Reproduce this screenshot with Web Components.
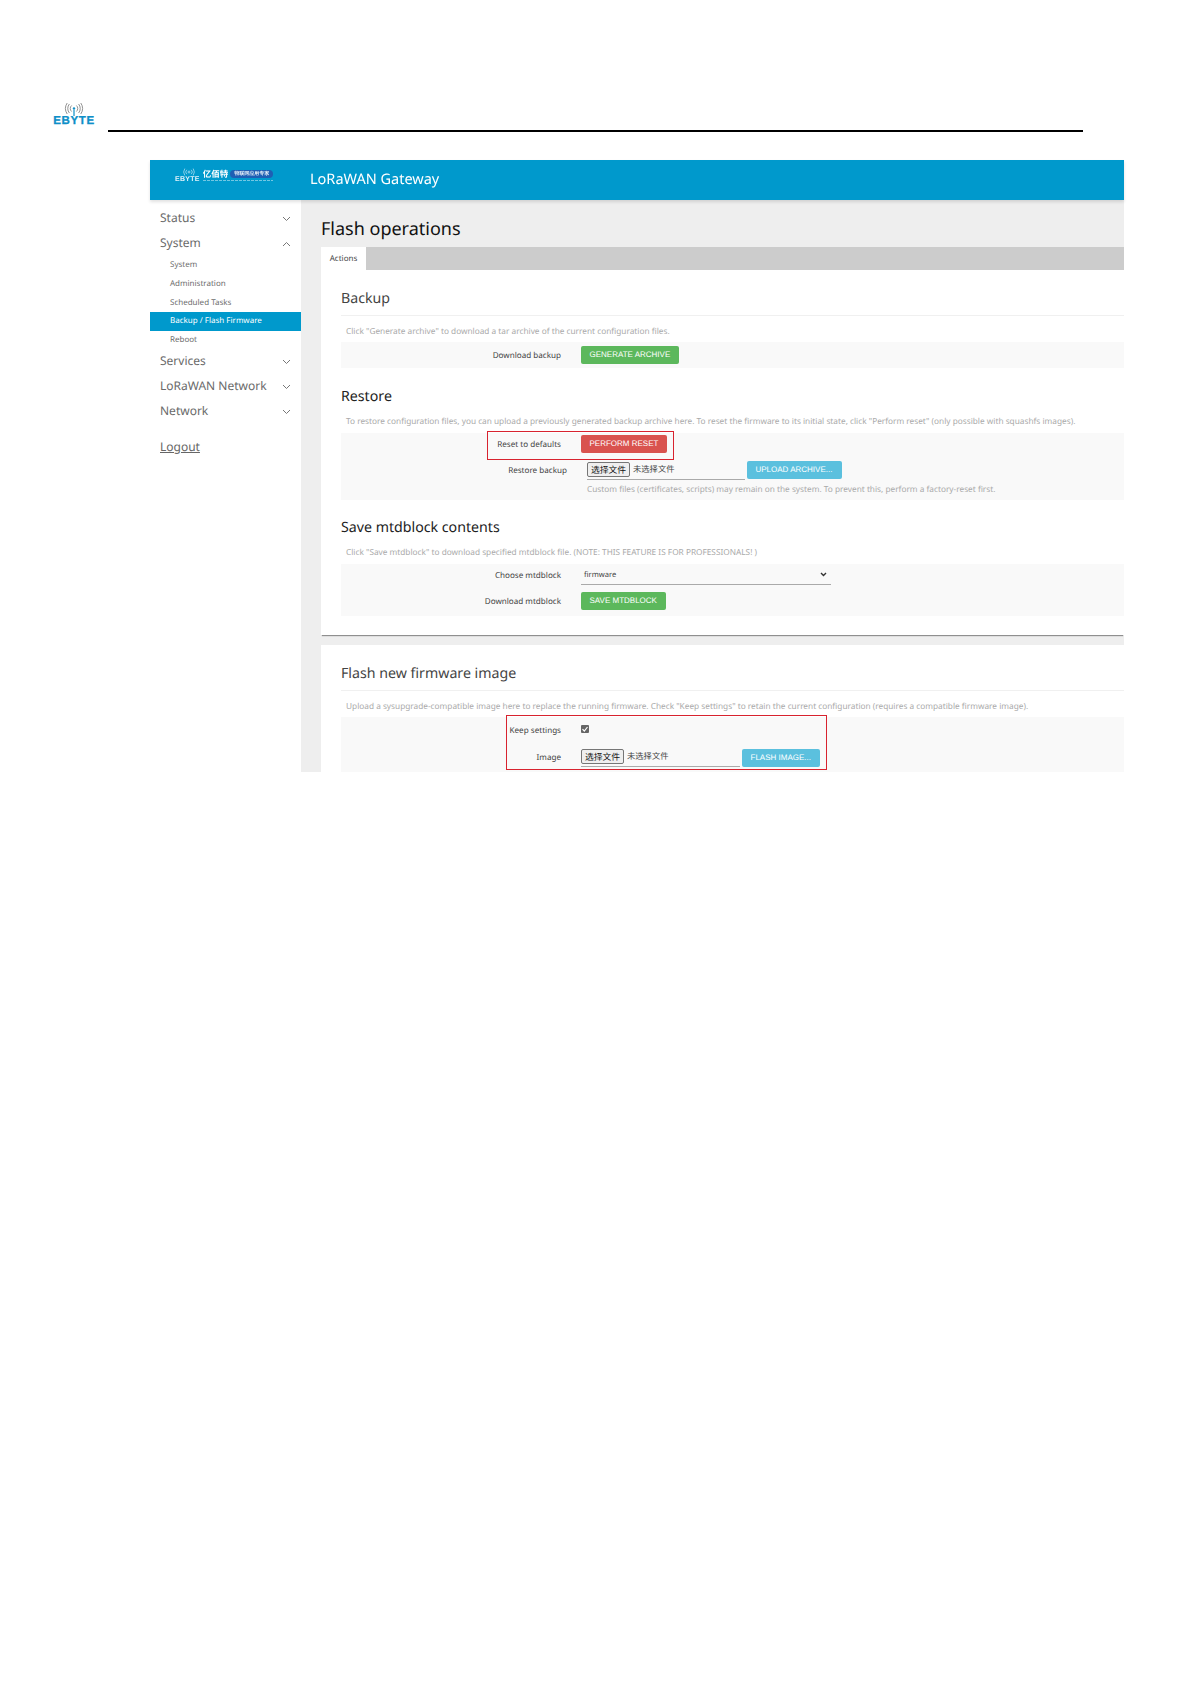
<!DOCTYPE html>
<html>
<head>
<meta charset="utf-8">
<title>Flash operations</title>
<style>
    html, body { margin: 0; background: #fff; }
    body { min-height: 1684px; font-family: "Noto Sans", "Noto Sans CJK SC", sans-serif; text-rendering: geometricPrecision; }
</style>
</head>
<body>
<doc-header></doc-header>
<gw-app>
    <gw-topbar slot="top"></gw-topbar>
    <gw-sidebar slot="side">
        <gw-nav label="Status"></gw-nav>
        <gw-nav label="System" open>
            <gw-subnav>System</gw-subnav>
            <gw-subnav>Administration</gw-subnav>
            <gw-subnav>Scheduled Tasks</gw-subnav>
            <gw-subnav active>Backup / Flash Firmware</gw-subnav>
            <gw-subnav>Reboot</gw-subnav>
        </gw-nav>
        <gw-nav label="Services"></gw-nav>
        <gw-nav label="LoRaWAN Network"></gw-nav>
        <gw-nav label="Network"></gw-nav>
        <gw-logout>Logout</gw-logout>
    </gw-sidebar>
    <gw-main slot="main">
        <gw-panel>
            <gw-section heading="Backup" rule desc='Click "Generate archive" to download a tar archive of the current configuration files.'>
                <gw-row label="Download backup" height="26"><gw-btn color="green" w="98">GENERATE ARCHIVE</gw-btn></gw-row>
            </gw-section>
            <gw-section heading="Restore" dark top="16" desc='To restore configuration files, you can upload a previously generated backup archive here. To reset the firmware to its initial state, click "Perform reset" (only possible with squashfs images).'>
                <gw-row label="Reset to defaults" height="22"><gw-btn color="red" w="86">PERFORM RESET</gw-btn></gw-row>
                <gw-row label="Restore backup" height="30" inset>
                    <gw-file width="158"></gw-file>
                    <gw-btn color="blue" w="95">UPLOAD ARCHIVE...</gw-btn>
                </gw-row>
                <gw-hint>Custom files (certificates, scripts) may remain on the system. To prevent this, perform a factory-reset first.</gw-hint>
            </gw-section>
            <gw-section heading="Save mtdblock contents" dark top="15" desc='Click "Save mtdblock" to download specified mtdblock file. (NOTE: THIS FEATURE IS FOR PROFESSIONALS! )'>
                <gw-row label="Choose mtdblock" height="22"><gw-select>firmware</gw-select></gw-row>
                <gw-row label="Download mtdblock" height="30"><gw-btn color="green" w="85">SAVE MTDBLOCK</gw-btn></gw-row>
            </gw-section>
        </gw-panel>
        <gw-panel last>
            <gw-section heading="Flash new firmware image" rule desc='Upload a sysupgrade-compatible image here to replace the running firmware. Check "Keep settings" to retain the current configuration (requires a compatible firmware image).'>
                <gw-row label="Keep settings" height="26"><gw-check></gw-check></gw-row>
                <gw-row label="Image" height="29">
                    <gw-file width="159"></gw-file>
                    <gw-btn color="blue" w="78">FLASH IMAGE...</gw-btn>
                </gw-row>
            </gw-section>
        </gw-panel>
        <gw-mark style="left:186px;top:231px;width:187px;height:29px"></gw-mark>
        <gw-mark style="left:205px;top:515px;width:321px;height:55px"></gw-mark>
    </gw-main>
</gw-app>

<script>
function def(name, css, html, setup) {
    customElements.define(name, class extends HTMLElement {
        constructor() {
            super();
            this.attachShadow({ mode: 'open' });
            this.shadowRoot.innerHTML = `<style>${css}</style>${html}`;
        }
        connectedCallback() {
            if (setup) setup(this, this.shadowRoot);
        }
    });
}

const chevron = up => `<svg width="9" height="6" viewBox="0 0 9 6" fill="none" stroke="#777" stroke-width="1"><path d="${up ? 'M1 5l3.5-3.5L8 5' : 'M1 1l3.5 3.5L8 1'}"/></svg>`;

def('doc-header', `
    :host { display: flex; align-items: flex-end; height: 132px; box-sizing: border-box; padding-left: 53px; margin-bottom: 28px; }
    .logo { width: 42px; height: 24px; display: flex; flex-direction: column; align-items: center; margin-bottom: 5px; }
    .word { font: 900 11.5px/9px "Liberation Sans", sans-serif; color: #0f8fc8; letter-spacing: .6px; -webkit-text-stroke: .3px #0f8fc8; }
    .line { flex: 1; height: 2px; background: #000; margin: 0 108px 0 13px; }
    svg { display: block; margin-bottom: 1px; }
`, `
    <div class="logo">
        <svg width="22" height="13" viewBox="0 0 22 13" fill="none" stroke="#777" stroke-width=".8">
            <circle cx="11" cy="5.5" r="1.2" fill="#0f8fc8" stroke="none"/>
            <path d="M8.6 2.5a4 4 0 0 0 0 6M13.4 2.5a4 4 0 0 1 0 6M6.4 1a7 7 0 0 0 0 9M15.6 1a7 7 0 0 1 0 9M4.2 0a10 10 0 0 0 0 11M17.8 0a10 10 0 0 1 0 11"/>
            <path d="M11 7v6" stroke="#0f8fc8" stroke-width="1.2"/>
        </svg>
        <div class="word">EBYTE</div>
    </div>
    <div class="line"></div>
`);

def('gw-app', `
    :host { display: grid; grid-template-columns: 151px 823px; grid-template-rows: 40px 572px; width: 974px; margin-left: 150px; background: #fff; filter: blur(.25px); }
    ::slotted([slot=top]) { grid-column: 1 / 3; }
`, `<slot name="top"></slot><slot name="side"></slot><slot name="main"></slot>`);

def('gw-topbar', `
    :host { display: flex; align-items: center; background: #0099cc; color: #fff; box-shadow: 0 2px 3px rgba(0,0,0,.12); position: relative; z-index: 1; }
    .logo { width: 110px; margin: 0 0 13px 25px; display: flex; align-items: flex-end; gap: 3px; height: 18px; }
    .brand { position: relative; font: 900 7px/7px "Liberation Sans", sans-serif; letter-spacing: .3px; padding-top: 9px; color: #dff2fa; }
    .brand svg { position: absolute; left: 6px; top: 1px; }
    .right { display: flex; flex-direction: column; gap: 1px; }
    .top { display: flex; align-items: center; gap: 2px; }
    .cn { font: 700 8.5px/10px "Noto Sans CJK SC", sans-serif; }
    .pill { background: #1f5fb4; border-radius: 4px; font: 500 5px/8px "Noto Sans CJK SC", sans-serif; padding: 0 4px; height: 8px; white-space: nowrap; }
    .sub { height: 1px; background: repeating-linear-gradient(90deg, rgba(255,255,255,.45) 0 3px, transparent 3px 4px); margin-bottom: 2px; }
    .title { margin-left: 25px; font-size: 14.5px; font-weight: 400; position: relative; top: -1px; }
`, `
    <div class="logo">
        <div class="brand">
            <svg width="16" height="9" viewBox="0 0 16 9" fill="none" stroke="#dff2fa" stroke-width=".6"><circle cx="8" cy="4" r="1"/><path d="M5.8 1.8a3 3 0 0 0 0 4.4M10.2 1.8a3 3 0 0 1 0 4.4M3.8.6a6 6 0 0 0 0 6.8M12.2.6a6 6 0 0 1 0 6.8"/></svg>
            EBYTE
        </div>
        <div class="right">
            <div class="top"><span class="cn">亿佰特</span><span class="pill">物联网应用专家</span></div>
            <div class="sub"></div>
        </div>
    </div>
    <div class="title">LoRaWAN Gateway</div>
`);

def('gw-sidebar', `
    :host { display: block; background: #fff; padding-top: 5px; color: #666; }
`, `<slot></slot>`);

def('gw-nav', `
    :host { display: block; }
    .head { height: 25px; display: flex; align-items: center; justify-content: space-between; padding: 0 10px; font-size: 12px; color: #6a6a6a; }
    .sub { padding-top: 1px; margin-bottom: -2px; }
    .sub:not(.open) { display: none; }
`, `<div class="head"><span class="t"></span><span class="c"></span></div><div class="sub"><slot></slot></div>`, (el, root) => {
    root.querySelector('.t').textContent = el.getAttribute('label');
    root.querySelector('.c').innerHTML = chevron(el.hasAttribute('open'));
    root.querySelector('.sub').classList.toggle('open', el.hasAttribute('open'));
});

def('gw-subnav', `
    :host { display: block; height: 18.8px; line-height: 18px; padding-left: 20px; font-size: 8px; color: #6e6e6e; }
    :host([active]) { background: #0099cc; color: #fff; }
`, `<slot></slot>`);

def('gw-logout', `
    :host { display: block; margin: 15px 0 0 10px; font-size: 12px; text-decoration: underline; color: #666; }
`, `<slot></slot>`);

def('gw-main', `
    :host { display: block; position: relative; background: #eee; padding: 14px 0 0 20px; overflow: hidden; }
    h1 { margin: 0; font-size: 18px; font-weight: 400; line-height: 30px; color: #111; height: 33px; }
    .tabs { display: flex; height: 23px; background: #ccc; }
    .tab { width: 45px; background: #fff; font-size: 8px; line-height: 23px; text-align: center; color: #444; }
`, `<h1>Flash operations</h1><div class="tabs"><div class="tab">Actions</div></div><slot></slot>`);

def('gw-panel', `
    :host { display: block; background: #fff; padding: 0 0 19px 20px; margin-bottom: 10px; box-shadow: 0 2px 1px -1px rgba(0,0,0,.4); }
    :host([last]) { box-shadow: none; margin: 0; padding-bottom: 0; }
`, `<slot></slot>`);

def('gw-section', `
    :host { display: block; padding-top: 15px; }
    h3 { margin: 0; font-size: 14.2px; font-weight: 400; height: 26px; line-height: 27px; color: #444; }
    :host([dark]) h3 { color: #222; line-height: 26px; }
    .rule { height: 1px; background: #f0f0f0; margin-top: 4px; }
    p { margin: 0; padding: 6px 0 0 5px; font-size: 8.28px; line-height: 20px; color: #aaa; white-space: nowrap; }
    :host([dark]) p { padding-top: 4px; padding-bottom: 3px; line-height: 16px; }
    .body { background: #f9f9f9; }
`, `<h3></h3><div class="rule"></div><p></p><div class="body"><slot></slot></div>`, (el, root) => {
    root.querySelector('h3').textContent = el.getAttribute('heading');
    root.querySelector('p').textContent = el.getAttribute('desc');
    if (!el.hasAttribute('rule')) root.querySelector('.rule').remove();
    if (el.hasAttribute('top')) el.style.paddingTop = el.getAttribute('top') + 'px';
});

def('gw-row', `
    :host { display: flex; align-items: center; }
    .label { width: 220px; text-align: right; font-size: 8.1px; color: #444; white-space: nowrap; flex: none; }
    :host([inset]) .label { width: 226px; }
    .ctl { margin-left: 20px; display: flex; align-items: center; gap: 2px; }
`, `<div class="label"></div><div class="ctl"><slot></slot></div>`, (el, root) => {
    root.querySelector('.label').textContent = el.getAttribute('label');
    el.style.height = el.getAttribute('height') + 'px';
});

const btnColors = { green: '#5cb85c', red: '#d9534f', blue: '#5bc0de' };
def('gw-btn', `
    :host { display: block; height: 18px; box-sizing: border-box; padding-left: 8.5px; border-radius: 2px; color: #fff; font: 8px/17px "Liberation Sans", sans-serif; white-space: nowrap; }
`, `<slot></slot>`, el => {
    el.style.background = btnColors[el.getAttribute('color')];
    el.style.width = el.getAttribute('w') + 'px';
});

def('gw-file', `
    :host { display: flex; align-items: flex-start; gap: 3px; height: 17px; padding-top: 1px; border-bottom: 1px solid #aaa; box-sizing: content-box; font: 8.3px/14px "Noto Sans CJK SC", sans-serif; color: #444; }
    b { font-weight: 400; box-sizing: border-box; width: 43px; height: 15px; background: #efefef; border: 1px solid #767676; border-radius: 2px; text-align: center; color: #111; font-size: 8.8px; line-height: 13px; }
`, `<b>选择文件</b><span>未选择文件</span>`, el => {
    el.style.width = el.getAttribute('width') + 'px';
});

def('gw-hint', `
    :host { display: block; padding: 0 0 5px 246px; font-size: 8.28px; line-height: 10px; color: #aaa; white-space: nowrap; }
`, `<slot></slot>`);

def('gw-select', `
    :host { display: flex; align-items: center; justify-content: space-between; width: 243px; height: 18px; padding: 0 4px 0 3px; border-bottom: 1px solid #aaa; font-size: 7.6px; color: #444; }
`, `<slot></slot><svg width="7" height="5" viewBox="0 0 7 5" fill="none" stroke="#333" stroke-width="1.4"><path d="M1 1l2.5 2.5L6 1"/></svg>`);

def('gw-check', `
    :host { display: block; width: 8px; height: 8px; background: #666; border-radius: 1px; margin-top: -2px; }
    svg { display: block; }
`, `<svg width="8" height="8" viewBox="0 0 8 8" fill="none" stroke="#fff" stroke-width="1.2"><path d="M1.5 4.2l1.8 1.8 3.2-4"/></svg>`);

def('gw-mark', `
    :host { display: block; position: absolute; box-sizing: border-box; border: 1.5px solid #d8232f; pointer-events: none; }
`, ``);
</script>
</body>
</html>
